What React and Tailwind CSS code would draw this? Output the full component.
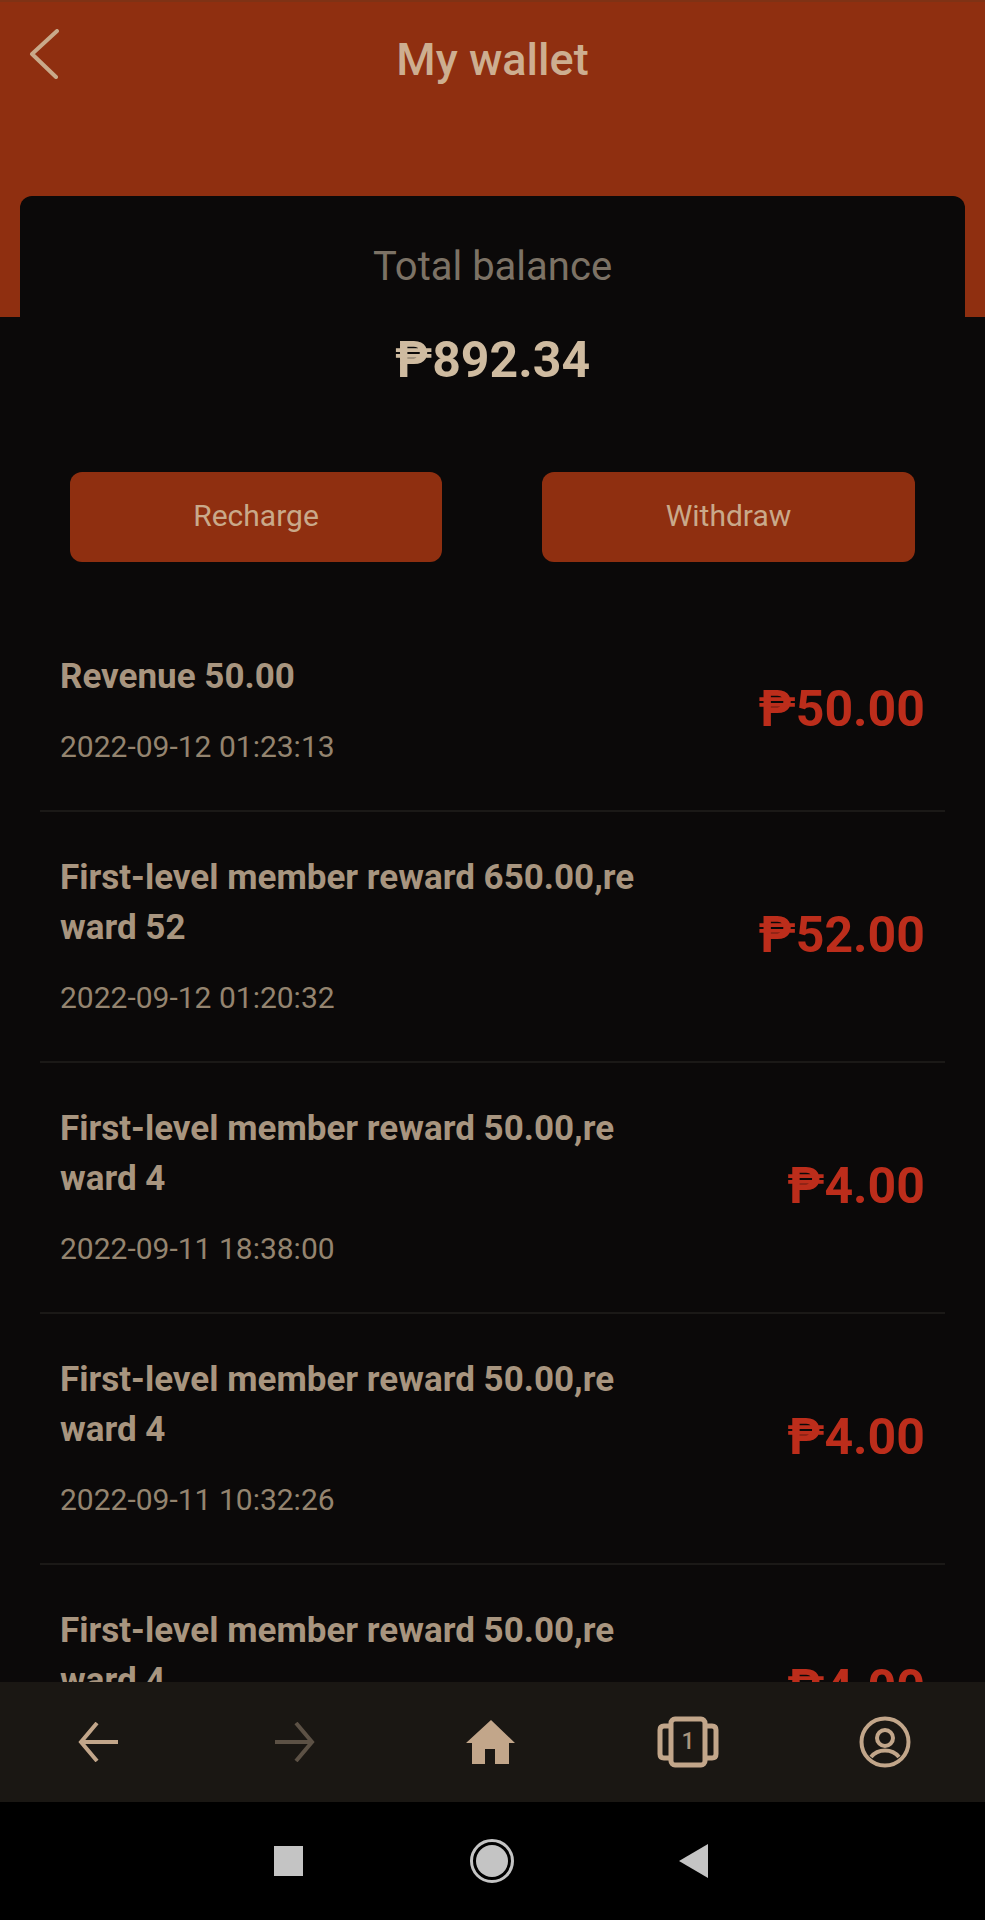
import React from 'react';

const records = [
  { title: 'Revenue 50.00', time: '2022-09-12 01:23:13', amount: '₱50.00' },
  { title: 'First-level member reward 650.00,reward 52', time: '2022-09-12 01:20:32', amount: '₱52.00' },
  { title: 'First-level member reward 50.00,reward 4', time: '2022-09-11 18:38:00', amount: '₱4.00' },
  { title: 'First-level member reward 50.00,reward 4', time: '2022-09-11 10:32:26', amount: '₱4.00' },
  { title: 'First-level member reward 50.00,reward 4', time: '2022-09-11 09:12:41', amount: '₱4.00' },
];

function RecordRow({ record }) {
  return (
    <div className="mx-10 flex items-center justify-between border-b-2 border-[#1b1917] px-5 pt-[41px] pb-[45px]">
      <div className="w-[578px]">
        <div className="break-all text-[35px] leading-[50px] font-bold text-[#a8957f]">{record.title}</div>
        <div className="mt-[27px] text-[30px] leading-9 text-[#94846f]">{record.time}</div>
      </div>
      <div className="text-[50px] leading-[56px] font-bold text-[#bc2d1b]">{record.amount}</div>
    </div>
  );
}

function App() {
  return (
    <div className="flex h-[1920px] flex-col overflow-hidden bg-[#0b0909] font-['Roboto',sans-serif]">
      <div className="min-h-0 flex-1 overflow-hidden">
        <div className="h-[317px] border-t-2 border-[#7f3215] bg-[#8f2f10]">
          <div className="grid grid-cols-[100px_1fr_100px] items-center pt-[26px]">
            <svg className="-mt-3 ml-[29px]" width="30" height="50" viewBox="0 0 30 50" fill="none" stroke="#c9a98a" strokeWidth="4" strokeLinecap="round" strokeLinejoin="round">
              <path d="M28 2 L3 25 L27 48" />
            </svg>
            <h1 className="text-center text-[45px] leading-[64px] font-medium text-[#cdae90]">My wallet</h1>
          </div>
        </div>
        <div className="mx-5 -mt-[121px] rounded-t-xl bg-[#0b0909] pt-[45px]">
          <div className="text-center text-[40px] leading-[52px] text-[#7c7265]">Total balance</div>
          <div className="mt-[39px] text-center text-[50px] leading-[56px] font-bold text-[#cfbba0]">₱892.34</div>
          <div className="mt-[84px] flex justify-between px-[50px]">
            <button className="h-[90px] w-[372px] rounded-xl bg-[#8f2f10] pb-1 text-[30px] text-[#c9a98a]">Recharge</button>
            <button className="h-[90px] w-[373px] rounded-xl bg-[#8f2f10] pb-1 text-[30px] text-[#c9a98a]">Withdraw</button>
          </div>
        </div>
        <div className="mt-[49px]">
          {records.map((record, i) => (
            <RecordRow key={i} record={record} />
          ))}
        </div>
      </div>

      <nav className="grid h-[120px] shrink-0 grid-cols-5 items-center justify-items-center bg-[#1a1713] pr-[2px]">
        <svg width="40" height="40" viewBox="0 0 40 40" fill="none" stroke="#c2a68a" strokeWidth="4">
          <path d="M19 1 L3 20 L19 39 M3 20 H40" />
        </svg>
        <svg width="40" height="40" viewBox="0 0 40 40" fill="none" stroke="#5c5145" strokeWidth="4">
          <path d="M21 1 L37 20 L21 39 M0 20 H37" />
        </svg>
        <svg width="50" height="44" viewBox="0 0 50 44" fill="#c2a68a">
          <path d="M25 0 L49 23 H43 V44 H29 V29 H19 V44 H6 V23 H0 Z" />
        </svg>
        <div className="relative h-[52px] w-[62px]">
          <svg width="62" height="52" viewBox="0 0 62 52" fill="none" stroke="#c2a68a" strokeWidth="5">
            <rect x="14" y="3" width="34" height="46" rx="4" />
            <path d="M14 10 H7 Q3 10 3 14 V38 Q3 42 7 42 H14 M48 10 H55 Q59 10 59 14 V38 Q59 42 55 42 H48" />
          </svg>
          <span className="absolute inset-0 flex items-center justify-center text-[23px] font-medium text-[#a8957f]">1</span>
        </div>
        <svg width="52" height="52" viewBox="0 0 52 52" fill="none" stroke="#c2a68a" strokeWidth="4">
          <circle cx="26" cy="26" r="23.5" />
          <circle cx="26" cy="22" r="8" />
          <path d="M12 41 C16 36 21 34.5 26 34.5 C31 34.5 36 36 40 41" />
        </svg>
      </nav>

      <div className="flex h-[118px] shrink-0 items-center bg-black pl-[274px]">
        <div className="h-[30px] w-[29px] bg-[#c4c4c4]" />
        <svg className="ml-[167px]" width="44" height="44" viewBox="0 0 44 44">
          <circle cx="22" cy="22" r="20.5" fill="none" stroke="#c4c4c4" strokeWidth="3" />
          <circle cx="22" cy="22" r="16" fill="#c4c4c4" />
        </svg>
        <svg className="ml-[165px]" width="30" height="34" viewBox="0 0 30 34" fill="#c4c4c4">
          <path d="M29 0 V34 L0 17 Z" />
        </svg>
      </div>
    </div>
  );
}

export default App;
